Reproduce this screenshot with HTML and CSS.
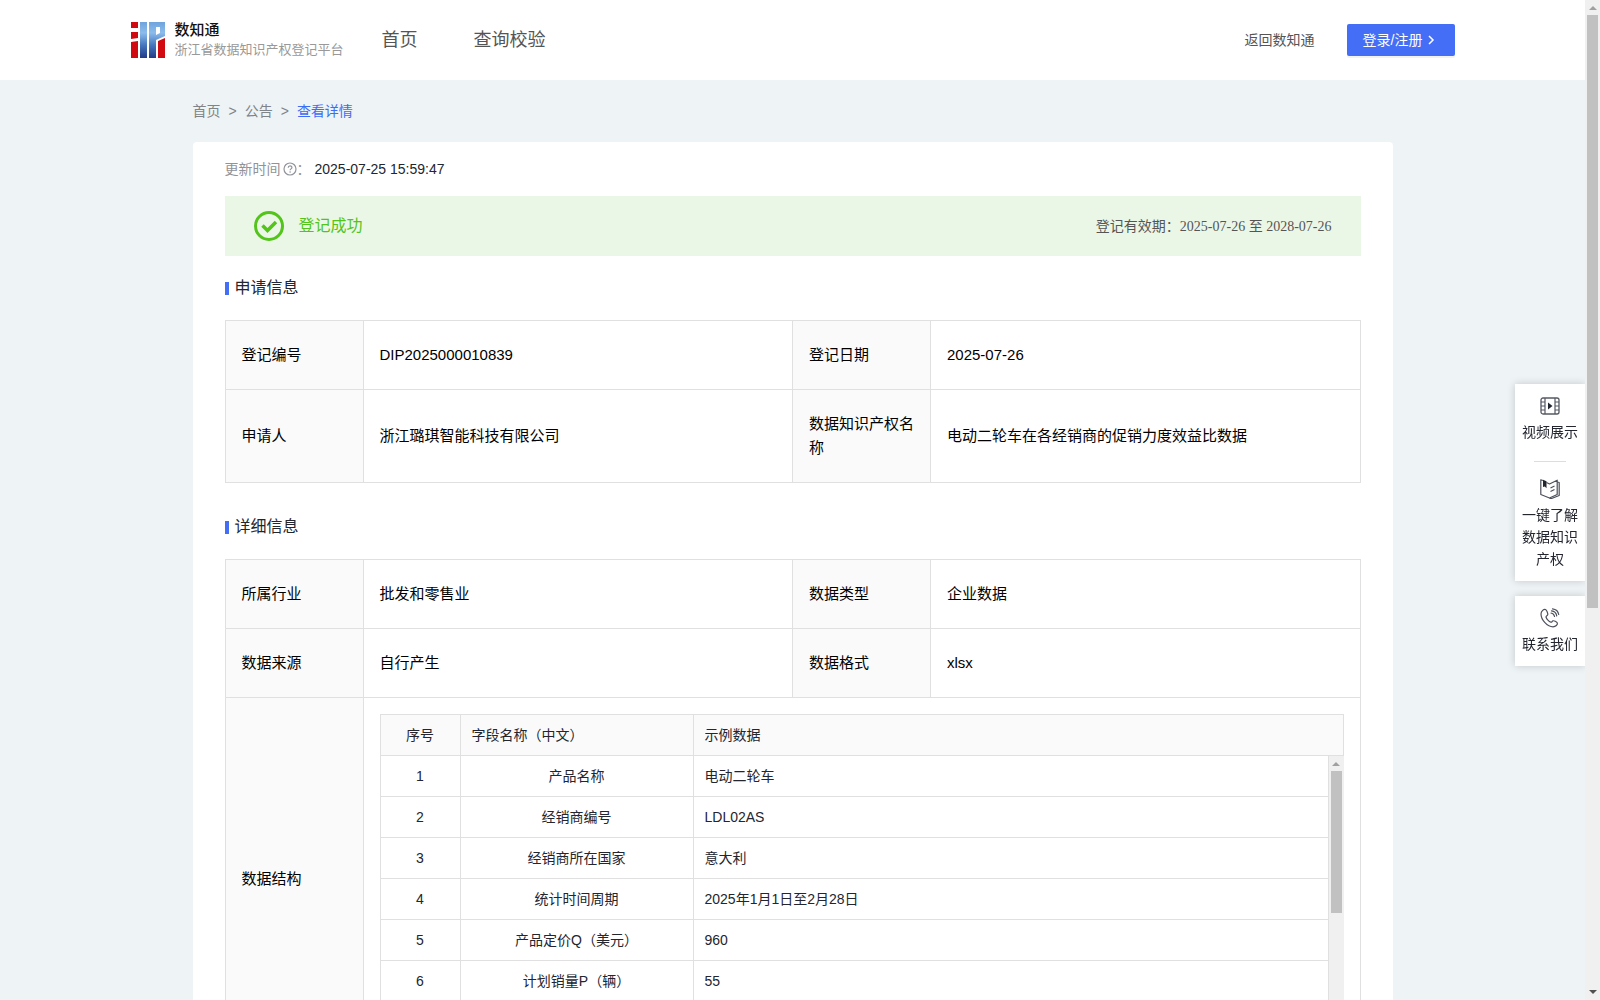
FILE: index.html
```html
<!DOCTYPE html>
<html lang="zh-CN">
<head>
<meta charset="utf-8">
<meta name="viewport" content="width=device-width, initial-scale=1">
<title>数知通 - 浙江省数据知识产权登记平台</title>
<link rel="stylesheet" href="styles.css">
</head>
<body>
<div class="page">
<header class="header">
  <div class="header-inner">
    <a class="brand" href="#">
      <svg class="logo" viewBox="0 0 34 36" aria-hidden="true">
        <defs>
          <linearGradient id="blue" x1="0" y1="0" x2="0" y2="1">
            <stop offset="0" stop-color="#6fa3dc"/>
            <stop offset=".3" stop-color="#8bbcec"/>
            <stop offset=".65" stop-color="#4475bd"/>
            <stop offset="1" stop-color="#233c86"/>
          </linearGradient>
        </defs>
        <path fill="#d00a10" d="M0 0h7v6H0zM0 10h7v6L0 17zM0 20l7-1v17H0zM27 19l7-3v20h-7z"/>
        <path fill="url(#blue)" d="M9 0h7v36H9zM18 0h16v14l-9 4v18h-7z"/>
        <path fill="#fff" d="M25 5h4v6l-4 2z"/>
      </svg>
      <span class="brand-text"><strong class="brand-name">数知通</strong><span class="brand-sub">浙江省数据知识产权登记平台</span></span>
    </a>
    <nav class="nav"><a href="#">首页</a><a href="#">查询校验</a></nav>
    <div class="actions">
      <a class="back" href="#">返回数知通</a>
      <button class="login" type="button">登录/注册<svg class="chevron" viewBox="0 0 12 12" aria-hidden="true"><path d="M4 2l4 4-4 4" fill="none" stroke="currentColor" stroke-width="1.500"/></svg></button>
    </div>
  </div>
</header>

<main class="main">
  <nav class="crumbs" aria-label="面包屑"><a href="#">首页</a><span>&gt;</span><a href="#">公告</a><span>&gt;</span><a class="current" href="#">查看详情</a></nav>

  <article class="card">
    <div class="updated">
      <span class="updated-label">更新时间<svg class="help" viewBox="0 0 14 14" aria-hidden="true"><g fill="none" stroke="currentColor"><circle cx="7" cy="7" r="6" stroke-width="1.200"/><path d="M5.200 5.700c0-2.500 3.700-2.400 3.700-.2 0 1.300-1.800 1.400-1.800 2.800" stroke-width="1.200"/></g><circle cx="7.100" cy="10" r=".8" fill="currentColor"/></svg>：</span>
      <time>2025-07-25 15:59:47</time>
    </div>

    <div class="status">
      <svg class="check" viewBox="0 0 30 30" aria-hidden="true"><g fill="none" stroke="#52c41a"><circle cx="15" cy="15" r="13.500" stroke-width="3"/><path d="M8.500 14.500l5 5 8.500-8.500" stroke-width="3.500"/></g></svg>
      <span class="status-text">登记成功</span>
      <span class="validity">登记有效期：<span class="dates">2025-07-26 至 2028-07-26</span></span>
    </div>

    <h2 class="title">申请信息</h2>
    <table class="info">
      <colgroup><col class="c-label"><col><col class="c-label"><col></colgroup>
      <tbody>
        <tr><th scope="row">登记编号</th><td>DIP2025000010839</td><th scope="row">登记日期</th><td>2025-07-26</td></tr>
        <tr><th scope="row">申请人</th><td>浙江璐琪智能科技有限公司</td><th scope="row">数据知识产权名称</th><td>电动二轮车在各经销商的促销力度效益比数据</td></tr>
      </tbody>
    </table>

    <h2 class="title">详细信息</h2>
    <table class="info">
      <colgroup><col class="c-label"><col><col class="c-label"><col></colgroup>
      <tbody>
        <tr><th scope="row">所属行业</th><td>批发和零售业</td><th scope="row">数据类型</th><td>企业数据</td></tr>
        <tr><th scope="row">数据来源</th><td>自行产生</td><th scope="row">数据格式</th><td>xlsx</td></tr>
        <tr>
          <th scope="row">数据结构</th>
          <td class="nested" colspan="3">
            <div class="fields">
              <table class="grid grid-head">
                <colgroup><col class="c-no"><col class="c-name"><col></colgroup>
                <thead><tr><th scope="col" class="mid">序号</th><th scope="col">字段名称（中文）</th><th scope="col">示例数据</th></tr></thead>
              </table>
              <div class="scroll">
                <div class="scroll-view">
                <table class="grid">
                  <colgroup><col class="c-no"><col class="c-name"><col></colgroup>
                  <tbody>
                    <tr><td class="mid">1</td><td class="mid">产品名称</td><td>电动二轮车</td></tr>
                    <tr><td class="mid">2</td><td class="mid">经销商编号</td><td>LDL02AS</td></tr>
                    <tr><td class="mid">3</td><td class="mid">经销商所在国家</td><td>意大利</td></tr>
                    <tr><td class="mid">4</td><td class="mid">统计时间周期</td><td>2025年1月1日至2月28日</td></tr>
                    <tr><td class="mid">5</td><td class="mid">产品定价Q（美元）</td><td>960</td></tr>
                    <tr><td class="mid">6</td><td class="mid">计划销量P（辆）</td><td>55</td></tr>
                  </tbody>
                </table>
                </div>
                <div class="bar" aria-hidden="true"><i class="arrow up"></i><i class="thumb thumb-table"></i><i class="arrow down"></i></div>
              </div>
            </div>
          </td>
        </tr>
      </tbody>
    </table>
  </article>
</main>
</div>

<div class="bar" aria-hidden="true"><i class="arrow up"></i><i class="thumb thumb-page"></i><i class="arrow down"></i></div>

<aside class="dock">
  <div class="dock-box">
    <a class="dock-item" href="#">
      <svg viewBox="0 0 20 20" aria-hidden="true"><g fill="none" stroke="#555963"><rect x="1" y="2" width="18" height="16" rx="2" stroke-width="1.300"/><path d="M5 2v16M15 2v16M1 6h4M1 10h4M1 14h4M15 6h4M15 10h4M15 14h4" stroke-width="1.200"/></g><path d="M8 6.500v7l4.500-3.500z" fill="#23252f"/></svg>
      <span>视频展示</span>
    </a>
    <a class="dock-item" href="#">
      <svg viewBox="0 0 20 20" aria-hidden="true"><g fill="none" stroke="#4c505a" stroke-width="1.200" stroke-linejoin="round"><path d="M3 1.500L.8 .8v14.700L9.500 19l7.700-3.500V1.200L9.500 5 6.500 3.500"/><path d="M17.200 3l2 .5v13L11.500 19.500H9.500"/><path d="M10.500 9l4-2M10.500 12.500l4-2"/></g><path d="M3 .8l3.500 1.500v7L4.800 7.500 3 8z" fill="#23252f"/></svg>
      <span>一键了解数据知识产权</span>
    </a>
  </div>
  <div class="dock-box">
    <a class="dock-item" href="#">
      <svg viewBox="0 0 20 20" aria-hidden="true"><g fill="none" stroke="#4c505a" stroke-width="1.200" stroke-linecap="round" stroke-linejoin="round"><path d="M5.500 1.500C4 .8 1 3 1 6c0 6 6.500 12.800 12 12.800 2.600 0 5-2.200 4.300-3.800-.6-1.300-3.300-2.500-4.300-2.200-1 .3-1 1.700-2.200 1.400C9 13.700 6.500 11 6 9c-.2-1.200 1.500-1.300 1.800-2.400C8 5.500 6.900 2.200 5.500 1.500z"/><path d="M11 5c2 .2 3.200 1.600 3.500 3.500M11.500 2.800c3 .3 4.800 2.200 5.200 5M12.500.8c3.600.4 5.700 2.600 6.200 5.700"/></g></svg>
      <span>联系我们</span>
    </a>
  </div>
</aside>
</body>
</html>
```
FILE: styles.css
```css
* {
  box-sizing: border-box;
}

body {
  display: flex;
  height: 100vh;
  margin: 0;
  overflow: hidden;
  background: #eef3f6;
  color: #23252f;
  font: 14px/22px "Liberation Sans", "Noto Sans CJK SC", sans-serif;
}

a {
  color: inherit;
  text-decoration: none;
}

.page {
  flex: 1;
  min-width: 0;
  overflow-y: auto;
  scrollbar-width: none;
}

/* Scroll bars, shared by the page and the field list */
.bar {
  display: flex;
  flex: none;
  flex-direction: column;
  align-items: center;
  justify-content: space-between;
  width: 15px;
  padding: 6px 0;
  background: #f0f0f0;
}

.arrow {
  border: 4px solid transparent;
}

.arrow.up {
  border-top: 0;
  border-bottom-color: #a0a0a0;
}

.arrow.down {
  border-bottom: 0;
  border-top-color: #505050;
}

.thumb {
  width: 11px;
  margin: 5px 0 auto;
  background: #c1c1c1;
}

.thumb-page {
  height: 60%;
}

.thumb-table {
  height: 142px;
}

/* Header */
.header {
  background: #fff;
}

.header-inner {
  display: flex;
  align-items: center;
  max-width: 1324px;
  height: 80px;
  margin: 0 auto;
}

.brand {
  display: flex;
  align-items: center;
  gap: 10px;
}

.logo {
  width: 34px;
  height: 36px;
}

.brand-text {
  display: flex;
  flex-direction: column;
}

.brand-name {
  font-size: 15px;
  font-weight: 500;
  line-height: 20px;
  color: #111;
}

.brand-sub {
  font-size: 13px;
  line-height: 20px;
  color: #999;
}

.nav {
  display: flex;
  gap: 56px;
  margin-left: 38px;
  font-size: 18px;
  color: #555;
}

.actions {
  display: flex;
  align-items: center;
  gap: 32px;
  margin-left: auto;
}

.back {
  color: #555;
}

.login {
  display: flex;
  align-items: center;
  gap: 3px;
  width: 108px;
  height: 32px;
  padding: 0 16px;
  border: 0;
  border-radius: 2px;
  background: #446ef5;
  box-shadow: 0 2px 0 rgba(0, 0, 0, .05);
  color: #fff;
  font: inherit;
  white-space: nowrap;
}

.chevron {
  flex: none;
  width: 12px;
  height: 12px;
}

/* Page body */
.main {
  max-width: 1200px;
  margin: 0 auto;
}

.crumbs {
  display: flex;
  gap: 8px;
  padding: 20px 0;
  color: #808388;
}

.crumbs .current {
  color: #3d6cf5;
}

.card {
  padding: 16px 32px 32px;
  border-radius: 4px;
  background: #fff;
}

.updated {
  display: flex;
  gap: 4px;
}

.updated-label {
  display: flex;
  align-items: center;
  color: #909399;
}

.help {
  width: 14px;
  height: 14px;
  margin-left: 2px;
}

.status {
  display: flex;
  align-items: center;
  height: 60px;
  margin-top: 16px;
  padding: 0 29px;
  background: #ebf7e6;
}

.check {
  width: 30px;
  height: 30px;
}

.status-text {
  margin-left: 15px;
  font-size: 16px;
  color: #52c41a;
}

.validity {
  margin-left: auto;
  color: #555;
}

.dates {
  font-family: "Liberation Serif", "Noto Sans CJK SC", serif;
}

.title {
  display: flex;
  align-items: center;
  gap: 6px;
  margin: 20px 0;
  font-size: 16px;
  font-weight: 400;
  line-height: 24px;
}

.title::before {
  content: "";
  width: 4px;
  height: 13px;
  background: #446ef5;
}

.info {
  width: 100%;
  border-collapse: collapse;
  table-layout: fixed;
  font-size: 15px;
  line-height: 24px;
  color: #000;
}

.info + .title {
  margin-top: 32px;
}

.c-label {
  width: 138px;
}

.info th,
.info td {
  padding: 22px 16px;
  border: 1px solid #e0e0e0;
  font-weight: 400;
  text-align: left;
}

.info th {
  background: #fafafa;
  padding-right: 15px;
}

.info .nested {
  padding: 16px;
}

.fields {
  border-top: 1px solid #e0e0e0;
  border-left: 1px solid #e0e0e0;
}

.scroll {
  display: flex;
  height: 288px;
}

.scroll-view {
  flex: 1;
  min-width: 0;
  overflow: hidden;
}

.grid {
  width: 100%;
  border-collapse: separate;
  border-spacing: 0;
  table-layout: fixed;
  font-size: 14px;
  line-height: 22px;
  color: #23252f;
}

.c-no {
  width: 80px;
}

.c-name {
  width: 233px;
}

.info .grid th,
.info .grid td {
  height: 41px;
  padding: 9px 11px;
  border: 0 solid #e0e0e0;
  border-width: 0 1px 1px 0;
}

.info .grid .mid {
  text-align: center;
}

/* Floating shortcuts, beside the page's scroll bar */
.dock {
  position: fixed;
  top: 384px;
  right: 15px;
  display: grid;
  gap: 15px;
  width: 70px;
}

.dock-box {
  background: #fff;
  box-shadow: 0 0 8px rgba(0, 0, 0, .18);
  clip-path: inset(-8px 0 -8px -8px);
}

.dock-item {
  display: flex;
  flex-direction: column;
  align-items: center;
  gap: 5px;
  padding: 12px 7px 11px;
  text-align: center;
}

.dock-item svg {
  width: 20px;
  height: 20px;
}

.dock-item + .dock-item::before {
  content: "";
  width: 32px;
  height: 1px;
  margin-bottom: 12px;
  background: #ddd;
}

.dock-item + .dock-item {
  padding-top: 7px;
}
```
